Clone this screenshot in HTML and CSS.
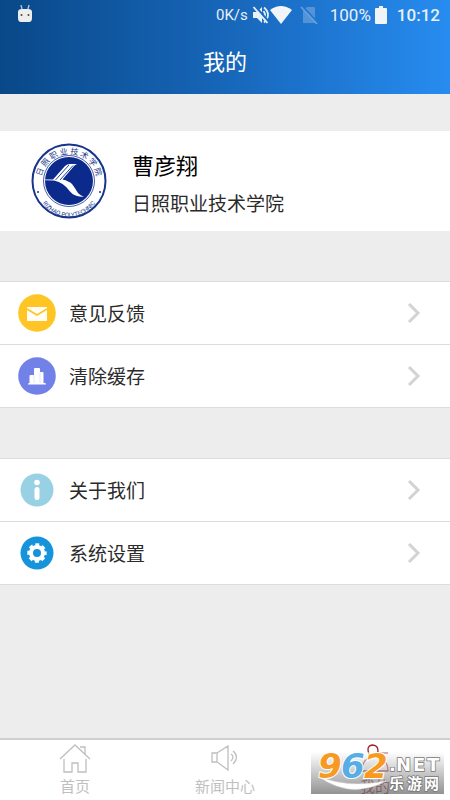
FILE: index.html
```html
<!DOCTYPE html>
<html lang="zh-CN">
<head>
    <meta charset="UTF-8">
    <meta name="viewport" content="width=device-width, initial-scale=1.0">
    <title>我的</title>
    <link rel="stylesheet" href="styles.css">
</head>

<body>
<header class="header">
    <div class="status-bar">
        <svg class="robot" width="16" height="18" viewBox="0 0 16 18">
            <path d="M4 0l1 4M12 0l-1 4" stroke="#a9c5e2" stroke-width="1.4"/>
            <path d="M1 7q0-3 4-3h6q4 0 4 3v6q0 4-3 4H4q-3 0-3-4z" fill="#eeeeec"/>
            <circle cx="4.500" cy="10" r="1" fill="#444"/>
            <circle cx="11.500" cy="10" r="1" fill="#444"/>
        </svg>
        <span class="speed">0K/s</span>
        <svg width="18" height="20" viewBox="0 0 18 20">
            <path d="M1 7h4l5-5v16l-5-5H1z" fill="#e8f0f8"/>
            <path d="M11.500 6q3 4 0 8M12 2.500q8 7 0 15" fill="none" stroke="#e8f0f8" stroke-width="1.800"/>
            <path d="M3 1l14 16" stroke="#1a6cc2" stroke-width="2"/>
            <path d="M1.500 2l14 16" stroke="#e8f0f8" stroke-width="1.800"/>
        </svg>
        <svg width="22" height="18" viewBox="0 0 22 18">
            <path d="M0 4Q11-4 22 4L11 18z" fill="#f2f5f8"/>
        </svg>
        <svg class="sim" width="18" height="18" viewBox="0 0 18 18">
            <path d="M7 1h7q1 0 1 1v15H3V5z" fill="#5494d6"/>
            <path d="M2 0l16 17" stroke="#1f77d2" stroke-width="2"/>
            <path d="M1 1l16 17" stroke="#68a3de" stroke-width="1.500"/>
        </svg>
        <span class="percent">100%</span>
        <svg width="12" height="18" viewBox="0 0 12 18">
            <path d="M4 0h4v2h3q1 0 1 1v14q0 1-1 1H1q-1 0-1-1V3q0-1 1-1h3z" fill="#f2f5f8"/>
        </svg>
        <span class="clock">10:12</span>
    </div>
    <h1>我的</h1>
</header>

<main>
    <section class="profile">
        <svg class="avatar" width="76" height="76" viewBox="0 0 76 76">
            <defs>
                <path id="arc-top" d="M12 49.500A28 28 0 1 1 64 49.500"/>
                <path id="arc-bottom" d="M6 42A32 32 0 0 0 70 42"/>
            </defs>
            <circle cx="38" cy="38" r="36.500" fill="#fff" stroke="#17358b" stroke-width="2"/>
            <circle cx="38" cy="38" r="25.500" fill="#fff" stroke="#17358b" stroke-width="0.800"/>
            <circle cx="38" cy="38" r="24" fill="#0b2a8c"/>
            <path d="M14 36.500h8L34 23q2-2 5-2h7q-2 1-3 2L31.500 36.500Q38 38 41 41q3 4 5 7.500 2 3.500 7 5-9 1-14-5-6-9-16-11l-9-.3z" fill="#fff"/>
            <path d="M24.500 37L38 22M29 37l13-14.500" stroke="#0b2a8c" stroke-width="0.900"/>
            <text class="seal-cn"><textPath href="#arc-top" startOffset="50%">日 照 职 业 技 术 学 院</textPath></text>
            <text class="seal-en"><textPath href="#arc-bottom" startOffset="50%">RIZHAO POLYTECHNIC</textPath></text>
            <circle cx="7" cy="49" r="1" fill="#17358b"/>
            <circle cx="69" cy="49" r="1" fill="#17358b"/>
        </svg>
        <div class="profile-text">
            <h2>曹彦翔</h2>
            <p>日照职业技术学院</p>
        </div>
    </section>

    <nav class="menu">
        <a href="#feedback">
            <svg class="icon" width="38" height="38" viewBox="0 0 38 38">
                <circle cx="19" cy="19" r="18.800" fill="#fec524"/>
                <path d="M9.500 13h19q.5 0 .5.5v13q0 .5-.5.5h-19q-.5 0-.5-.5v-13q0-.5.5-.5z" fill="#fffdf5"/>
                <path d="M9 15l10 6 10-6" fill="none" stroke="#fec524" stroke-width="1.600"/>
            </svg>
            <span>意见反馈</span>
            <svg class="arrow" width="14" height="22" viewBox="0 0 14 22"><path d="M2 2l9 9-9 9"/></svg>
        </a>
        <a href="#cache">
            <svg class="icon" width="38" height="38" viewBox="0 0 38 38">
                <circle cx="19" cy="19" r="18.800" fill="#7281e8"/>
                <path d="M11.500 26V19q0-1 1-1H16v-6q0-1 1-1h4q1 0 1 1v3h2.500q1 0 1 1v10h1.500q1 0 1 1.500H10Q10 26 11 26z" fill="#fff"/>
                <path d="M16 18v8M22 15v11" stroke="#cfd4fb" stroke-width="0.600"/>
            </svg>
            <span>清除缓存</span>
            <svg class="arrow" width="14" height="22" viewBox="0 0 14 22"><path d="M2 2l9 9-9 9"/></svg>
        </a>
    </nav>

    <nav class="menu">
        <a href="#about">
            <svg class="icon" width="38" height="38" viewBox="0 0 38 38">
                <circle cx="19" cy="19" r="16.500" fill="#98d0e4"/>
                <circle cx="19" cy="11.500" r="2.800" fill="#fff"/>
                <rect x="16.500" y="16" width="5" height="13" rx="2.500" fill="#fff"/>
            </svg>
            <span>关于我们</span>
            <svg class="arrow" width="14" height="22" viewBox="0 0 14 22"><path d="M2 2l9 9-9 9"/></svg>
        </a>
        <a href="#settings">
            <svg class="icon" width="38" height="38" viewBox="0 0 38 38">
                <circle cx="19" cy="19" r="16.500" fill="#1593db"/>
                <circle cx="19" cy="19" r="6" fill="none" stroke="#fff" stroke-width="4"/>
                <circle cx="19" cy="19" r="8.200" fill="none" stroke="#fff" stroke-width="3" stroke-dasharray="3.800 2.640" stroke-dashoffset="1.900"/>
            </svg>
            <span>系统设置</span>
            <svg class="arrow" width="14" height="22" viewBox="0 0 14 22"><path d="M2 2l9 9-9 9"/></svg>
        </a>
    </nav>
</main>

<footer class="tab-bar">
    <a href="#home">
        <svg width="32" height="30" viewBox="0 0 32 30">
            <path d="M1 16L16 2l15 14M5 16v13h8v-9h6v9h8V16M21 4h5v7"/>
        </svg>
        <span>首页</span>
    </a>
    <a href="#news">
        <svg width="32" height="30" viewBox="0 0 32 30">
            <path d="M8 10H3v9h5M8 10l11-7v24L8 19zM8 10v9M22 11q4 3 0 7M24 8q7 6 0 13"/>
        </svg>
        <span>新闻中心</span>
    </a>
    <a href="#mine" class="active">
        <svg width="32" height="30" viewBox="0 0 32 30">
            <path d="M9 16q4-2 1-5-3-8 3-9 6 0 6 6 0 4-3 6M9 16q-6 2-6 12h26q0-8-5-11M21 10h8M21 15h6"/>
        </svg>
        <span>我的</span>
    </a>
    <div class="watermark">
        <svg width="133" height="42" viewBox="0 0 133 42">
            <path d="M7 24q30 13 68 5-35 19-68-5z" fill="#fff" stroke="#ddd" stroke-width="0.500"/>
            <g class="digits">
                <text x="7" y="26" fill="#f79a24">9</text>
                <text x="30" y="26" fill="#58aee4">6</text>
                <text x="53" y="26" fill="#f79a24">2</text>
            </g>
            <g class="net">
                <text x="78" y="19">.</text>
                <text x="85" y="19">N</text>
                <text x="102" y="19">E</text>
                <text x="116" y="19">T</text>
            </g>
            <g class="site">
                <text x="78" y="37">乐</text>
                <text x="96" y="37">游</text>
                <text x="113" y="37">网</text>
            </g>
        </svg>
    </div>
</footer>
</body>
</html>
```
FILE: styles.css
```css
* {
    box-sizing: border-box;
}

body {
    margin: 0;
    min-height: 100vh;
    display: flex;
    flex-direction: column;
    font-family: Roboto, "Noto Sans CJK SC", sans-serif;
    background-color: #ededed;
    color: #2b2b2b;
}

h1, h2, p {
    margin: 0;
    font-weight: normal;
}

a {
    color: inherit;
    text-decoration: none;
}

.header {
    height: 94px;
    color: #fff;
    background: linear-gradient(to right, #094888, #1766b9 50%, #278cf0);
}

.status-bar {
    display: flex;
    align-items: center;
    height: 30px;
    padding: 0 10px 0 17px;
    color: #e8f0f8;
    font-size: 17px;
}

.robot {
    margin-bottom: 2px;
}

.speed {
    margin-left: auto;
    margin-right: 4px;
    font-size: 15px;
}

.sim {
    margin: 0 12px 0 8px;
}

.percent {
    margin-right: 4px;
}

.clock {
    margin-left: 10px;
    font-weight: 500;
}

.header h1 {
    font-size: 22px;
    line-height: 66px;
    text-align: center;
}

main {
    flex: 1;
}

.profile {
    display: flex;
    align-items: center;
    height: 100px;
    margin: 37px 0 50px;
    padding-left: 31px;
    background-color: #fff;
}

.profile-text {
    margin-left: 25px;
    padding-top: 10px;
}

.profile-text h2 {
    font-size: 22px;
    line-height: 38px;
    color: #000;
}

.profile-text p {
    font-size: 19px;
    line-height: 38px;
}

.seal-cn,
.seal-en {
    fill: #17358b;
    text-anchor: middle;
}

.seal-cn {
    font: 8px "Noto Sans CJK SC", sans-serif;
}

.seal-en {
    font-size: 6px;
}

.menu {
    margin-bottom: 50px;
    background-color: #fff;
    border-bottom: 1px solid #dcdcdc;
}

.menu a {
    display: flex;
    align-items: center;
    height: 63px;
    padding: 0 29px 0 18px;
    border-top: 1px solid #dcdcdc;
    font-size: 19px;
}

.menu span {
    padding-bottom: 1px;
}

.menu .icon {
    margin-right: 13px;
}

.arrow {
    margin-left: auto;
    fill: none;
    stroke: #d3d3d3;
    stroke-width: 3;
}

.tab-bar {
    position: relative;
    display: flex;
    height: 62px;
    border-top: 2px solid #cfcfcf;
    background-color: #fff;
}

.tab-bar a {
    flex: 1;
    display: flex;
    flex-direction: column;
    align-items: center;
    padding-top: 3px;
    font-size: 15px;
    line-height: 28px;
    color: #bfbfbf;
}

.tab-bar a svg {
    flex: none;
    fill: none;
    stroke: currentColor;
    stroke-width: 1.3;
}

.tab-bar a.active {
    color: #a0202a;
}

/* 右下角水印 */
.watermark {
    position: absolute;
    right: 6px;
    bottom: 6px;
    height: 42px;
    background: linear-gradient(rgba(255, 255, 255, 0.5), rgba(110, 110, 110, 0.75));
}

.watermark svg {
    overflow: visible;
}

.digits {
    font: italic bold 34px "DejaVu Sans", sans-serif;
    stroke: #fff;
    stroke-width: 2;
    paint-order: stroke;
}

.net,
.site {
    fill: #fff;
    stroke: #777;
    stroke-width: 1.5;
    paint-order: stroke;
}

.net {
    font: bold 18px "DejaVu Sans", sans-serif;
}

.site {
    font: bold 15px "Noto Sans CJK SC", sans-serif;
}
```
